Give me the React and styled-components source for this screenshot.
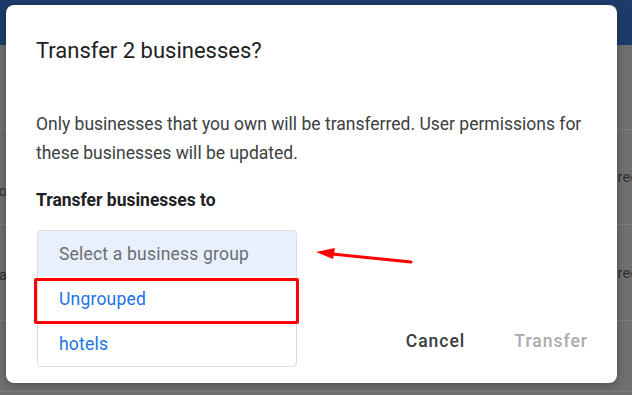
import React from 'react'
import styled, { createGlobalStyle } from 'styled-components'

const GlobalStyle = createGlobalStyle`
  html, body {
    margin: 0;
    padding: 0;
  }
  body {
    width: 632px;
    height: 395px;
    overflow: hidden;
    background: #707070;
    font-family: Roboto, "Noto Sans", Arial, sans-serif;
  }
`

const rows = [
  { left: '', right: '', height: 84, leftOffset: 0 },
  { left: 'Go', right: 'Direct', height: 94, leftOffset: 28 },
  { left: 'Media', right: 'Direct', height: 95, leftOffset: 4 },
  { left: '', right: '', height: 70, leftOffset: 0 },
]

const App = () => {
  return (
    <>
      <GlobalStyle />
      <Page>
        <TopBar />
        <Table>
          {rows.map((r, i) => (
            <Row key={i} style={{ height: r.height }}>
              <LeftCell style={{ marginTop: r.leftOffset }}>{r.left}</LeftCell>
              <RightCell>{r.right}</RightCell>
            </Row>
          ))}
        </Table>

        <Dialog>
          <Title>Transfer 2 businesses?</Title>
          <Body>
            Only businesses that you own will be transferred. User permissions for
            these businesses will be updated.
          </Body>
          <Label>Transfer businesses to</Label>
          <Field>
            <Menu>
              <MenuHeader>Select a business group</MenuHeader>
              <MenuItem>Ungrouped</MenuItem>
              <MenuItem>hotels</MenuItem>
              <Highlight />
            </Menu>
            <Arrow width="100" height="16" viewBox="0 0 100 16">
              <path d="M16 6 L95 14" stroke="#f00" strokeWidth="3" strokeLinecap="round" fill="none" />
              <path d="M0 4 L19 0 L17 11 Z" fill="#f00" />
            </Arrow>
          </Field>
          <Actions>
            <TextButton>Cancel</TextButton>
            <TextButton disabled>Transfer</TextButton>
          </Actions>
        </Dialog>
      </Page>
    </>
  )
}

const Page = styled.div`
  position: relative;
  width: 632px;
  height: 395px;
  overflow: hidden;
`

const TopBar = styled.div`
  height: 45px;
  background: #1e3c6b;
`

const Table = styled.div`
  display: flex;
  flex-direction: column;
`

const Row = styled.div`
  display: flex;
  align-items: center;
  justify-content: space-between;
  border-bottom: 1px solid #7c7c7c;
  font-size: 15px;
  color: #2e2f31;
`

const LeftCell = styled.div`
  width: 7px;
  overflow: hidden;
  display: flex;
  justify-content: flex-end;
  white-space: nowrap;
`

const RightCell = styled.div`
  width: 28px;
  overflow: hidden;
  white-space: nowrap;
`

const Dialog = styled.div`
  position: absolute;
  left: 6px;
  top: 5px;
  width: 611px;
  height: 378px;
  box-sizing: border-box;
  padding: 31px 29px 24px 30px;
  background: #fff;
  border-radius: 8px;
  box-shadow: 0 2px 10px rgba(0, 0, 0, 0.3);
  display: flex;
  flex-direction: column;
`

const Title = styled.div`
  font-size: 22px;
  line-height: 30px;
  color: #202124;
  margin-bottom: 44px;
`

const Body = styled.div`
  font-size: 17.5px;
  line-height: 29px;
  color: #3c4043;
`

const Label = styled.div`
  margin-top: 18px;
  font-size: 17.5px;
  line-height: 28px;
  font-weight: 700;
  color: #202124;
`

const Field = styled.div`
  position: relative;
  margin-top: 16px;
  margin-left: 1px;
  height: 46px;
`

const Menu = styled.div`
  position: absolute;
  left: 0;
  top: 0;
  width: 260px;
  border: 1px solid #dadce0;
  border-radius: 4px;
  background: #fff;
  box-sizing: border-box;
  z-index: 2;
`

const MenuHeader = styled.div`
  height: 45px;
  display: flex;
  align-items: center;
  padding-left: 21px;
  background: #e8f0fe;
  border-radius: 4px 4px 0 0;
  color: #6b6e72;
  font-size: 17.5px;
  letter-spacing: 0.2px;
`

const MenuItem = styled.div`
  height: 45px;
  display: flex;
  align-items: center;
  padding-left: 21px;
  color: #1a73e8;
  font-size: 17.5px;
  letter-spacing: 0.2px;
`

const Highlight = styled.div`
  position: absolute;
  left: -4px;
  top: 47px;
  width: 265px;
  height: 46px;
  box-sizing: border-box;
  border: 3px solid #f00;
  border-radius: 2px;
`

const Arrow = styled.svg`
  position: absolute;
  left: 279px;
  top: 18px;
`

const Actions = styled.div`
  margin-top: auto;
  display: flex;
  justify-content: flex-end;
  gap: 49px;
  height: 36px;
  align-items: center;
`

const TextButton = styled.button`
  border: none;
  background: none;
  padding: 0;
  font-family: Roboto, "Noto Sans", Arial, sans-serif;
  font-size: 17.5px;
  font-weight: 500;
  letter-spacing: 1px;
  color: ${p => (p.disabled ? '#a9abae' : '#3a3c40')};
  cursor: ${p => (p.disabled ? 'default' : 'pointer')};
`

export default App
